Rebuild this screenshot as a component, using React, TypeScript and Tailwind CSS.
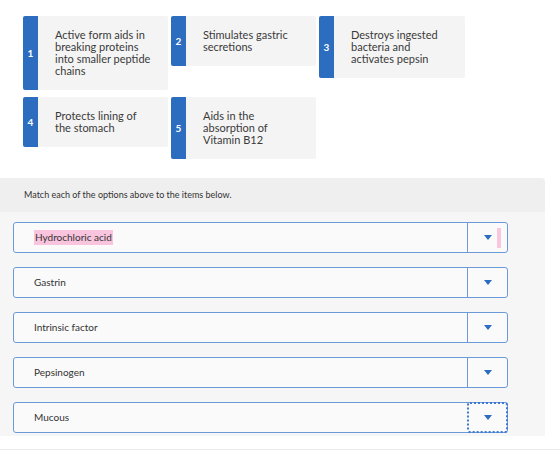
import React from 'react';

const options = [
  { n: 1, text: 'Active form aids in breaking proteins into smaller peptide chains' },
  { n: 2, text: 'Stimulates gastric secretions' },
  { n: 3, text: 'Destroys ingested bacteria and activates pepsin' },
  { n: 4, text: 'Protects lining of the stomach' },
  { n: 5, text: 'Aids in the absorption of Vitamin B12' },
];

const items = ['Hydrochloric acid', 'Gastrin', 'Intrinsic factor', 'Pepsinogen', 'Mucous'];

const Caret = () => (
  <svg width="8" height="5" viewBox="0 0 8 5">
    <path d="M0 0 H8 L4 5 Z" fill="#2d6cc0" />
  </svg>
);

export default function App() {
  return (
    <div className="w-[560px] h-[450px] bg-white overflow-hidden text-[#333]" style={{ fontFamily: 'Lato, "Open Sans", sans-serif' }}>
      {/* option cards */}
      <div className="pt-[16px] pl-[23px] grid grid-cols-[145px_145px_146px] gap-x-[3px] gap-y-[7px] items-start">
        {options.map(o => (
          <div key={o.n} className="flex rounded-[2px] overflow-hidden">
            <div className="w-[15px] shrink-0 bg-[#2c6dbf] flex items-center justify-center text-white text-[10px] font-bold">
              {o.n}
            </div>
            <div className="flex-1 bg-[#f4f4f4] pl-[17px] pr-[15px] py-[13px] text-[11px] leading-[12px] text-[#3a3a3a]">
              {o.text}
            </div>
          </div>
        ))}
      </div>

      {/* matching section */}
      <div className="mt-[19px] w-[545px] bg-[#f6f6f6] rounded-tr-[4px] pb-[3px]">
        <div className="h-[34px] bg-[#efefef] rounded-tr-[4px] pl-[24px] flex items-center text-[9px] text-[#333]">
          Match each of the options above to the items below.
        </div>
        <div className="pt-[10px] pl-[13px] flex flex-col gap-[14px]">
          {items.map((it, i) => (
            <div key={it} className="w-[495px] h-[31px] flex bg-[#fafafa] border border-[#6a9ad8] rounded-[3px]">
              <div className="flex-1 flex items-center pl-[20px] text-[10px] text-[#333]">
                {i === 0 ? <span className="bg-[#f9c4dd] px-[1px]">{it}</span> : it}
              </div>
              <div
                className={
                  i === 4
                    ? 'w-[41px] -my-px -mr-px border-2 border-dotted border-[#3f7ad0] rounded-[3px] flex items-center justify-center'
                    : 'w-[40px] border-l border-[#6a9ad8] flex items-center justify-center relative'
                }
              >
                <Caret />
                {i === 0 && <div className="absolute right-[6px] top-[5px] w-[4px] h-[20px] bg-[#fac6de]" />}
              </div>
            </div>
          ))}
        </div>
      </div>

      <div className="mt-[13px] border-t border-[#ececec]" />
    </div>
  );
}
